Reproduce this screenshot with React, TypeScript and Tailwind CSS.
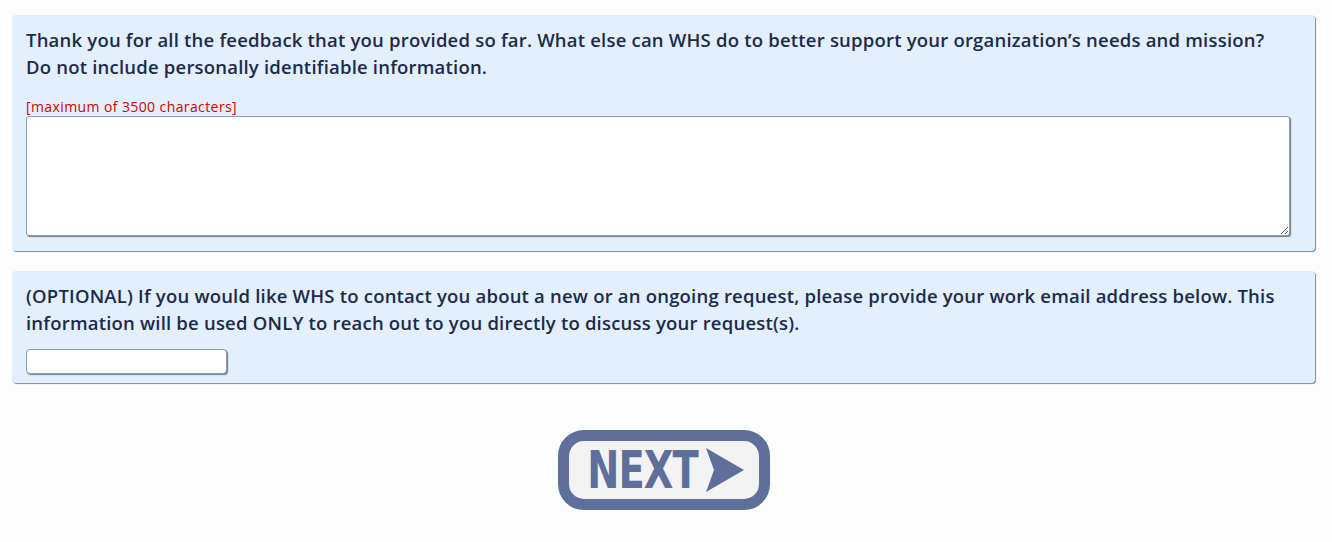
import { useState } from "react";

function NextButton() {
  return (
    <button
      type="button"
      className="flex items-center justify-center w-[212px] h-[80px] pr-[5px] rounded-[26px] border-[11px] border-[#5f6f9b] bg-[#f3f3f3]"
    >
      <span
        className="text-[#5f6f9b] font-bold text-[52px] leading-none tracking-[-1px] inline-block scale-x-[0.82] origin-center -ml-[4px]"
        style={{ fontFamily: '"DejaVu Sans Condensed", "DejaVu Sans", sans-serif' }}
      >
        NEXT
      </span>
      <svg width="38" height="44" viewBox="0 0 38 44" className="-ml-[4px]">
        <polygon points="0,0 38,22 0,44 8,22" fill="#5f6f9b" />
      </svg>
    </button>
  );
}

export default function App() {
  const [feedback, setFeedback] = useState("");
  const [email, setEmail] = useState("");

  return (
    <div
      className="min-h-[542px] bg-[#fdfdfd] pt-[15px] pl-[12px] pr-[17px] text-[#1c2b4a]"
      style={{ fontFamily: '"Open Sans", "Noto Sans", sans-serif' }}
    >
      <div className="bg-[#e3effd] rounded-[4px] shadow-[1px_1px_1px_#7f8b99] px-[14px] pt-[11px] pb-[15px]">
        <p className="text-[18.5px] leading-[27px] font-semibold tracking-[0.2px]">
          Thank you for all the feedback that you provided so far. What else can WHS do to better support your
          organization’s needs and mission?
          <br />
          Do not include personally identifiable information.
        </p>
        <div className="mt-[18px] text-[14px] leading-[18px] tracking-[0.4px] text-[#d40000]">
          [maximum of 3500 characters]
        </div>
        <textarea
          value={feedback}
          onChange={(e) => setFeedback(e.target.value)}
          maxLength={3500}
          className="block w-[1264px] h-[120px] bg-white border border-[#8e9cb0] rounded-[3px] shadow-[1px_1px_1px_#6f7a88]"
        />
      </div>

      <div className="mt-[20px] bg-[#e3effd] rounded-[4px] shadow-[1px_1px_1px_#7f8b99] px-[14px] pt-[11px] pb-[9px]">
        <p className="text-[18.5px] leading-[27px] font-semibold tracking-[0.2px]">
          (OPTIONAL) If you would like WHS to contact you about a new or an ongoing request, please provide your work
          email address below. This information will be used ONLY to reach out to you directly to discuss your
          request(s).
        </p>
        <input
          type="email"
          value={email}
          onChange={(e) => setEmail(e.target.value)}
          className="block mt-[13px] w-[201px] h-[25px] bg-white border border-[#8e9cb0] rounded-[4px] shadow-[1px_1px_1px_#6f7a88]"
        />
      </div>

      <div className="flex justify-center mt-[47px] pl-[1px]">
        <NextButton />
      </div>
    </div>
  );
}
